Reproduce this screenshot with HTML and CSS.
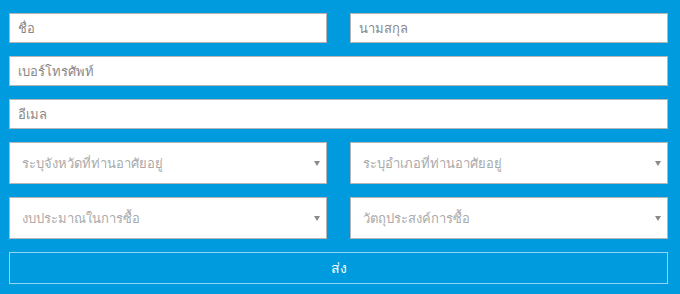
FILE: index.html
```html
<!DOCTYPE html>
<html lang="th">
<head>
    <meta charset="UTF-8">
    <meta name="viewport" content="width=device-width, initial-scale=1.0">
    <title>ติดต่อเรา</title>
    <link rel="stylesheet" href="styles.css">
</head>
<body>
    <form class="contact-form">
        <div class="row two-col">
            <input type="text" class="field" placeholder="ชื่อ">
            <input type="text" class="field" placeholder="นามสกุล">
        </div>
        <div class="row">
            <input type="tel" class="field" placeholder="เบอร์โทรศัพท์">
        </div>
        <div class="row">
            <input type="email" class="field" placeholder="อีเมล">
        </div>
        <div class="row two-col">
            <div class="select-box">
                <select class="select">
                    <option>ระบุจังหวัดที่ท่านอาศัยอยู่</option>
                </select>
            </div>
            <div class="select-box">
                <select class="select">
                    <option>ระบุอำเภอที่ท่านอาศัยอยู่</option>
                </select>
            </div>
        </div>
        <div class="row two-col">
            <div class="select-box">
                <select class="select">
                    <option>งบประมาณในการซื้อ</option>
                </select>
            </div>
            <div class="select-box">
                <select class="select">
                    <option>วัตถุประสงค์การซื้อ</option>
                </select>
            </div>
        </div>
        <button type="button" class="send-btn">ส่ง</button>
    </form>
</body>
</html>
```

FILE: styles.css
```css
body {
    margin: 0;
    background-color: #009ade;
    font-family: "Noto Sans", "Liberation Sans", sans-serif;
}

.contact-form {
    width: 659px;
    padding: 13px 0 0 9px;
}

.row {
    margin-bottom: 13px;
}

.two-col {
    display: grid;
    grid-template-columns: 318px 318px;
    gap: 23px;
}

.field {
    display: block;
    box-sizing: border-box;
    width: 100%;
    height: 30px;
    padding: 0 8px;
    border: 1px solid #b5b5b5;
    background-color: #fff;
    font-family: inherit;
    font-size: 13px;
    color: #666;
    outline: none;
}

.field::placeholder {
    color: #888;
}

.select-box {
    position: relative;
}

.select-box::after {
    content: "";
    position: absolute;
    right: 7px;
    top: 19px;
    border-left: 3px solid transparent;
    border-right: 3px solid transparent;
    border-top: 5px solid #8a8a8a;
    pointer-events: none;
}

.select {
    display: block;
    box-sizing: border-box;
    width: 100%;
    height: 42px;
    padding: 0 12px;
    border: 1px solid #b5b5b5;
    border-radius: 0;
    background-color: #fff;
    font-family: inherit;
    font-size: 13px;
    color: #aaa;
    appearance: none;
    -webkit-appearance: none;
    outline: none;
}

.send-btn {
    display: block;
    box-sizing: border-box;
    width: 659px;
    height: 32px;
    border: 1px solid #8fd6f5;
    background-color: transparent;
    color: #fff;
    font-family: inherit;
    font-size: 14px;
    cursor: pointer;
}
```
